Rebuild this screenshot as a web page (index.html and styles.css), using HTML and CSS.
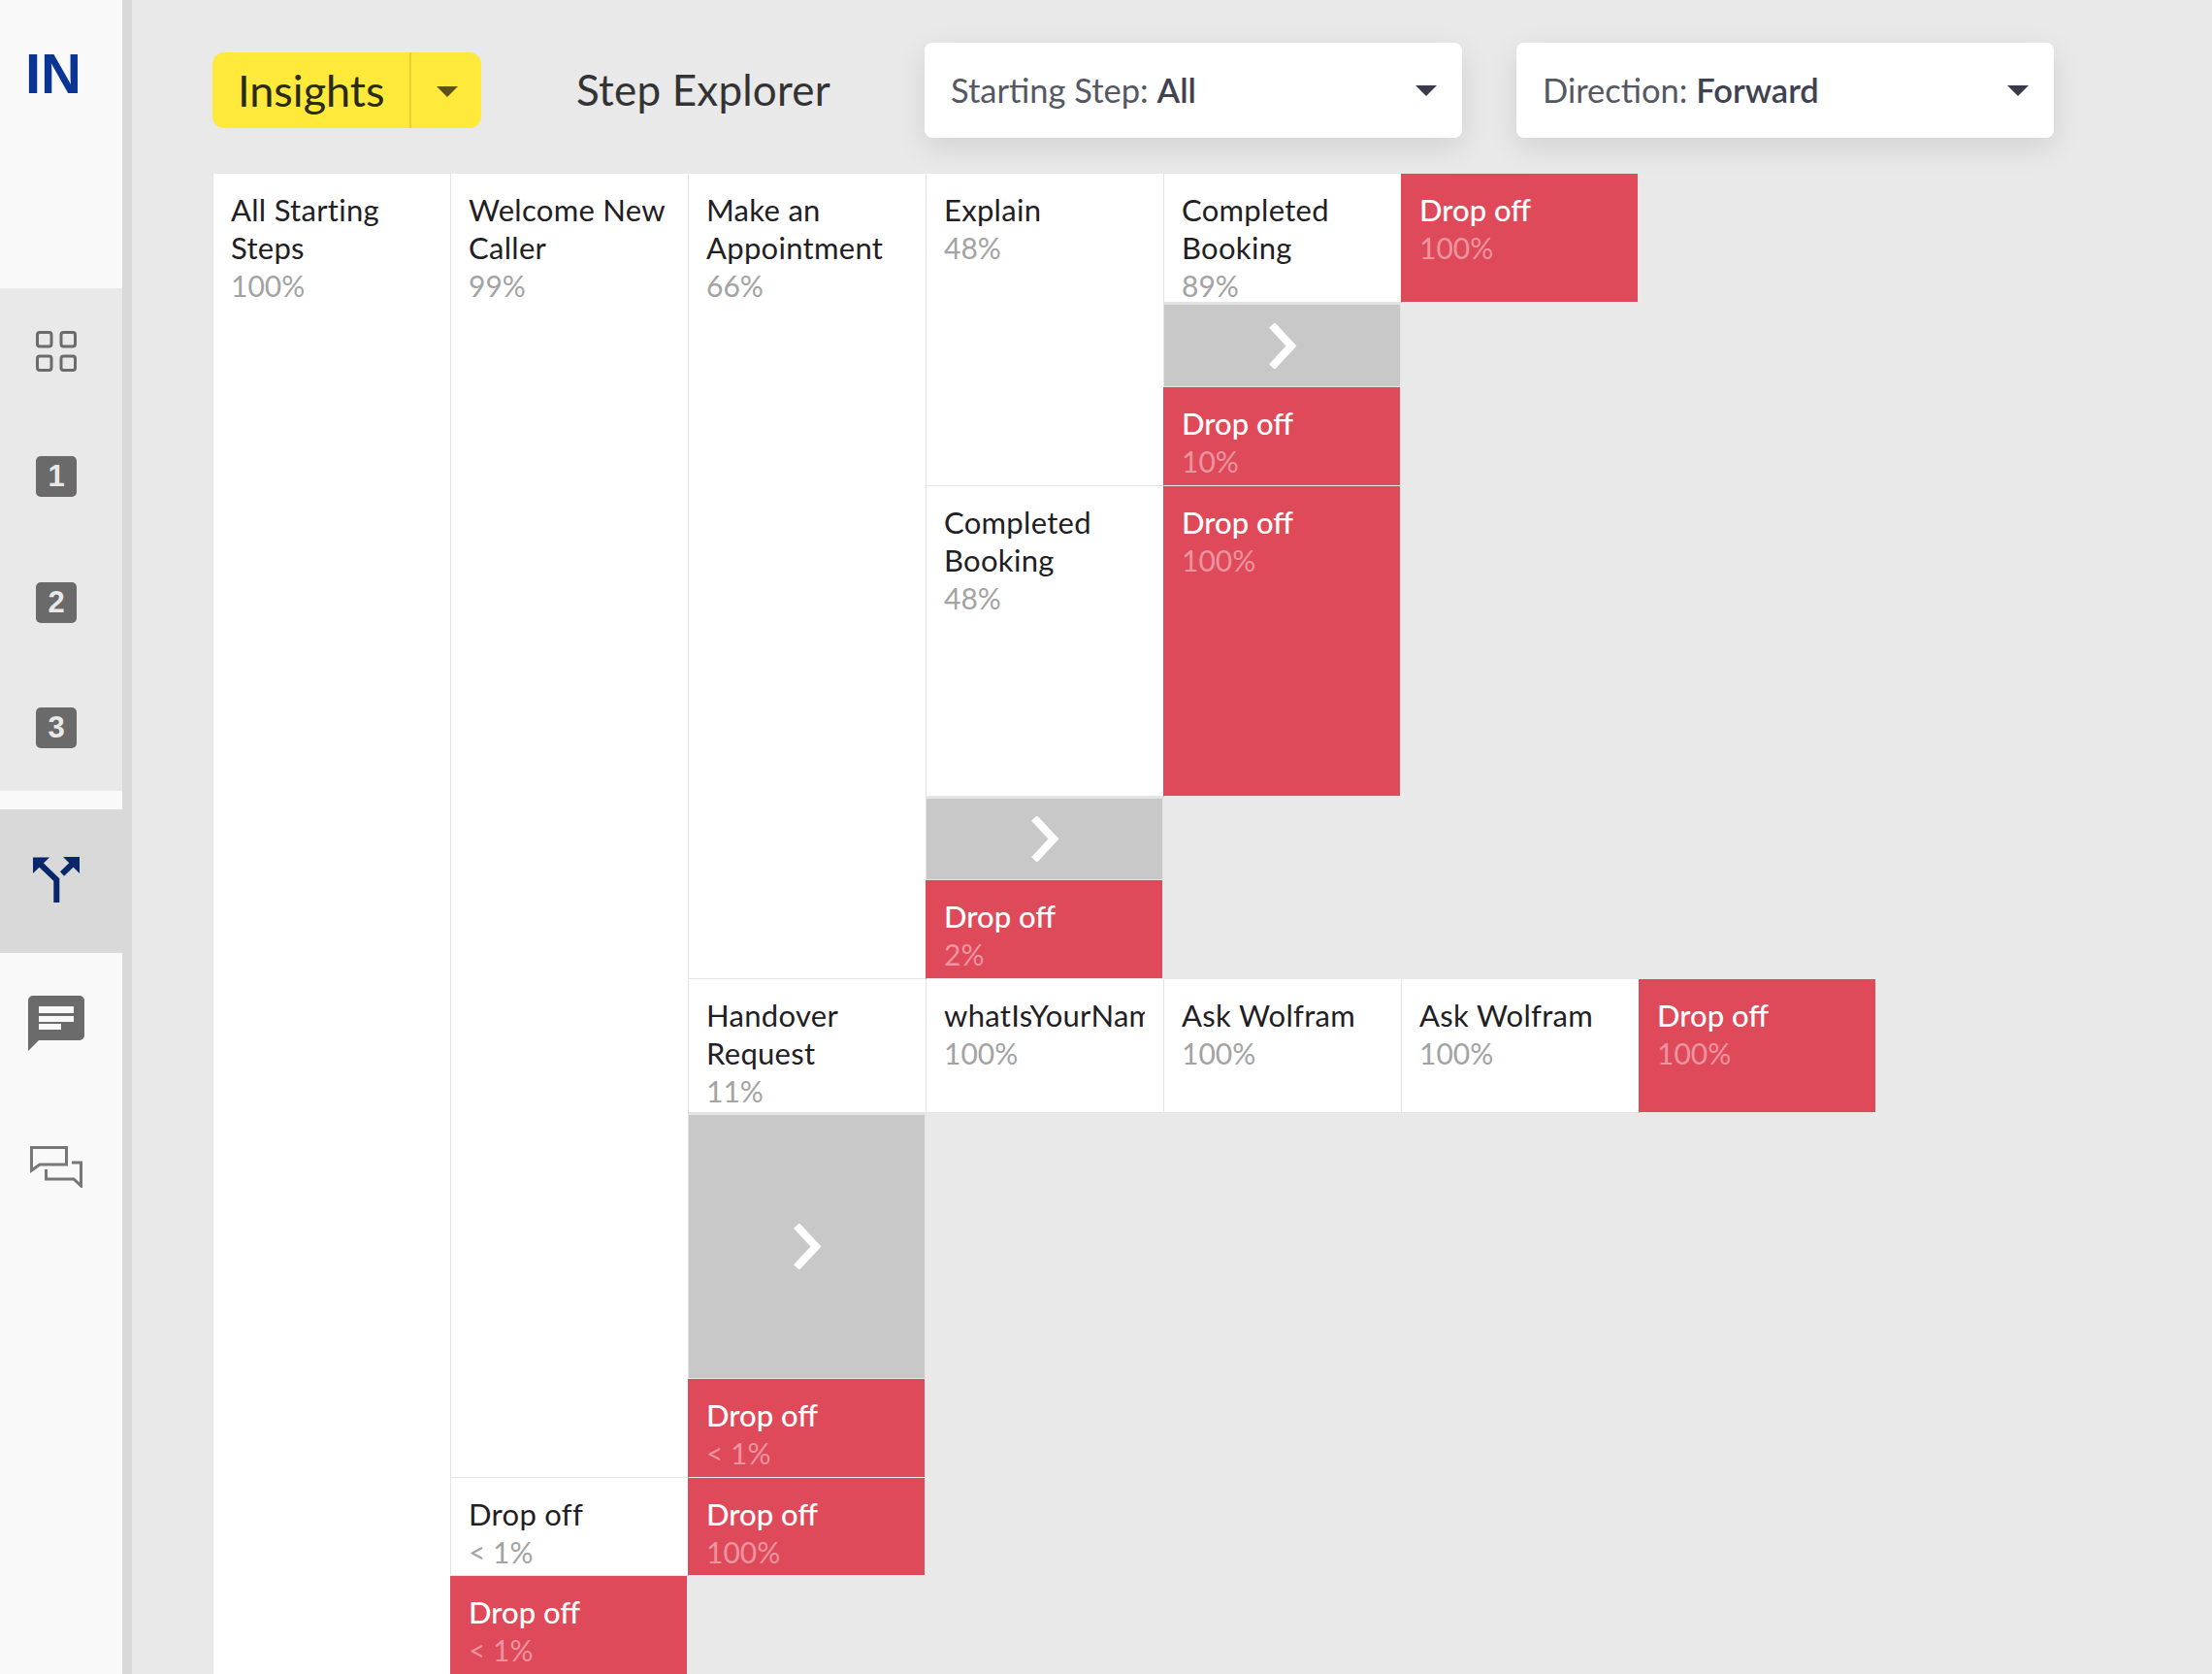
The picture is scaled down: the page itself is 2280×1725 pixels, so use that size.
FILE: index.html
```html
<!DOCTYPE html>
<html lang="en">
<head>
	<meta charset="UTF-8">
	<title>Step Explorer</title>
	<link rel="stylesheet" href="styles.css">
</head>
<body>
<div class="app">
	<div class="sidebar">
		<div class="logo">IN</div>
		<div class="side_group">
			<div class="side_item">
				<svg class="icon_grid" width="42" height="42" viewBox="0 0 42 42" fill="none" stroke="#6b6b6b" stroke-width="3">
					<rect x="1.5" y="1.5" width="14.5" height="14.5" rx="2.5"/>
					<rect x="26" y="1.5" width="14.5" height="14.5" rx="2.5"/>
					<rect x="1.5" y="26" width="14.5" height="14.5" rx="2.5"/>
					<rect x="26" y="26" width="14.5" height="14.5" rx="2.5"/>
				</svg>
			</div>
			<div class="side_item"><span class="badge">1</span></div>
			<div class="side_item"><span class="badge">2</span></div>
			<div class="side_item"><span class="badge">3</span></div>
		</div>
		<div class="side_item tall active">
			<svg width="48" height="47" viewBox="0 0 48 47" fill="none">
				<path d="M24.3 47V23.5L5 5M30 17.5L44 4" stroke="#08276b" stroke-width="6"/>
				<path d="M0 .5H17L0 17ZM48 0H31L48 17Z" fill="#08276b"/>
			</svg>
		</div>
		<div class="side_item tall">
			<svg width="58" height="57" viewBox="0 0 58 57">
				<path d="M5 0H53A5 5 0 0 1 58 5V41A5 5 0 0 1 53 46H11L0 57V5A5 5 0 0 1 5 0Z" fill="#6b6b6b"/>
				<path d="M11 11H47V18H11ZM11 21H47V27H11ZM11 29H34V35H11Z" fill="#f9f9f9"/>
			</svg>
		</div>
		<div class="side_item tall">
			<svg width="54" height="43" viewBox="0 0 54 43" fill="none" stroke="#777" stroke-width="3">
				<path d="M1.5 1.5H37.5V19H10L1.5 25Z"/>
				<path d="M43 17H52.5V41L45 34H16.5V24"/>
			</svg>
		</div>
	</div>

	<div class="main">
		<div class="topbar">
			<div class="insights">
				<span class="insights_name">Insights</span>
				<span class="insights_arrow"></span>
			</div>
			<div class="page_title">Step Explorer</div>
			<div class="select">
				<span>Starting Step: <b>All</b></span>
				<span class="select_arrow"></span>
			</div>
			<div class="select">
				<span>Direction: <b>Forward</b></span>
				<span class="select_arrow"></span>
			</div>
		</div>

		<div class="node chart">
			<div class="cell">
				<div class="name">All Starting Steps</div>
				<div class="pct">100%</div>
			</div>
			<div class="kids">
				<div class="node">
					<div class="cell">
						<div class="name">Welcome New Caller</div>
						<div class="pct">99%</div>
					</div>
					<div class="kids">
						<div class="node">
							<div class="cell">
								<div class="name">Make an Appointment</div>
								<div class="pct">66%</div>
							</div>
							<div class="kids">
								<div class="node">
									<div class="cell">
										<div class="name">Explain</div>
										<div class="pct">48%</div>
									</div>
									<div class="kids">
										<div class="node h133">
											<div class="cell">
												<div class="name">Completed Booking</div>
												<div class="pct">89%</div>
											</div>
											<div class="cell drop">
												<div class="name">Drop off</div>
												<div class="pct">100%</div>
											</div>
										</div>
										<div class="cell more h87"><svg width="30" height="47" viewBox="0 0 30 47" fill="none" stroke="#fff" stroke-width="8"><path d="M4 2L24 23.5L4 45"/></svg></div>
										<div class="cell drop h102">
											<div class="name">Drop off</div>
											<div class="pct">10%</div>
										</div>
									</div>
								</div>
								<div class="node h320">
									<div class="cell">
										<div class="name">Completed Booking</div>
										<div class="pct">48%</div>
									</div>
									<div class="cell drop">
										<div class="name">Drop off</div>
										<div class="pct">100%</div>
									</div>
								</div>
								<div class="cell more h86"><svg width="30" height="47" viewBox="0 0 30 47" fill="none" stroke="#fff" stroke-width="8"><path d="M4 2L24 23.5L4 45"/></svg></div>
								<div class="cell drop h102">
									<div class="name">Drop off</div>
									<div class="pct">2%</div>
								</div>
							</div>
						</div>
						<div class="node h138">
							<div class="cell">
								<div class="name">Handover Request</div>
								<div class="pct">11%</div>
							</div>
							<div class="cell">
								<div class="name clip">whatIsYourName</div>
								<div class="pct">100%</div>
							</div>
							<div class="cell">
								<div class="name">Ask Wolfram</div>
								<div class="pct">100%</div>
							</div>
							<div class="cell">
								<div class="name">Ask Wolfram</div>
								<div class="pct">100%</div>
							</div>
							<div class="cell drop">
								<div class="name">Drop off</div>
								<div class="pct">100%</div>
							</div>
						</div>
						<div class="cell more h274"><svg width="30" height="47" viewBox="0 0 30 47" fill="none" stroke="#fff" stroke-width="8"><path d="M4 2L24 23.5L4 45"/></svg></div>
						<div class="cell drop h102">
							<div class="name">Drop off</div>
							<div class="pct">&lt; 1%</div>
						</div>
					</div>
				</div>
				<div class="node h101">
					<div class="cell">
						<div class="name">Drop off</div>
						<div class="pct">&lt; 1%</div>
					</div>
					<div class="cell drop">
						<div class="name">Drop off</div>
						<div class="pct">100%</div>
					</div>
				</div>
				<div class="cell drop h102">
					<div class="name">Drop off</div>
					<div class="pct">&lt; 1%</div>
				</div>
			</div>
		</div>
	</div>
</div>
</body>
</html>
```

FILE: styles.css
```css
*{
	box-sizing:border-box;
	margin:0;
	padding:0;
}

body{
	background-color:#e9e9e9;
	font-family:"Lato","Liberation Sans",sans-serif;
	height:1725px;
	overflow:hidden;
}

.app{
	display:flex;
	height:1725px;
}

/* sidebar */
.sidebar{
	width:136px;
	flex:none;
	background-color:#f9f9f9;
	border-right:solid 10px #d9d9d9;
}

.logo{
	height:297px;
	padding:43px 0 0 26px;
	font-family:"Liberation Sans",sans-serif;
	font-weight:bold;
	font-size:58px;
	line-height:66px;
	color:#0a3595;
}

.side_group{
	background-color:#e9e9e9;
	height:518px;
	margin-bottom:19px;
}

.side_item{
	height:129.5px;
	display:flex;
	align-items:center;
	justify-content:center;
	padding-right:10px;
}

.side_item.tall{
	height:148px;
	padding-bottom:3px;
}

.side_item.active{
	background-color:#d9d9d9;
	margin-right:-10px;
	padding-right:20px;
}

.badge{
	width:42px;
	height:42px;
	border-radius:5px;
	background-color:#6a6a6a;
	color:#e9e9e9;
	font-family:"Liberation Sans",sans-serif;
	font-weight:bold;
	font-size:31px;
	line-height:42px;
	text-align:center;
}

/* top bar */
.main{
	flex:1;
	padding-left:83px;
}

.topbar{
	display:flex;
	align-items:center;
	height:98px;
	margin:44px 0 37px;
}

.insights{
	width:277px;
	height:78px;
	flex:none;
	display:flex;
	background-color:#ffe93b;
	border-radius:12px;
	color:#2b2a14;
	font-size:45px;
	line-height:78px;
}

.insights_name{
	width:205px;
	padding-left:26px;
	border-right:solid 2px #e6d235;
}

.insights_arrow{
	width:0;
	height:0;
	margin:35px 0 0 26px;
	border-left:solid 11px transparent;
	border-right:solid 11px transparent;
	border-top:solid 11px #5b5217;
}

.page_title{
	width:457px;
	flex:none;
	padding:0 0 2px 98px;
	font-size:44px;
	letter-spacing:0.2px;
	color:#333;
}

.select{
	width:554px;
	height:98px;
	flex:none;
	margin-right:56px;
	padding:0 26px 2px 27px;
	display:flex;
	align-items:center;
	justify-content:space-between;
	background-color:#fff;
	border-radius:8px;
	box-shadow:0 10px 30px rgba(0,0,0,0.1);
	font-size:34.5px;
	color:#555863;
}

.select b{
	font-weight:600;
	color:#3f4250;
}

.select_arrow{
	width:0;
	height:0;
	margin-top:2px;
	border-left:solid 11px transparent;
	border-right:solid 11px transparent;
	border-top:solid 11px #3a3a4a;
}

/* step tree */
.node{
	display:flex;
}

.kids{
	display:flex;
	flex-direction:column;
}

.cell{
	width:245px;
	flex:none;
	overflow:hidden;
	padding:18px 19px 0 18px;
	background-color:#fff;
	border-left:solid 1px #e4e4e4;
	border-bottom:solid 1px #e4e4e4;
	font-size:30px;
	line-height:39px;
	color:#1f2024;
}

.name{
	font-size:31px;
	letter-spacing:0.3px;
}

.pct{
	color:#a3a3a3;
}

.clip{
	white-space:nowrap;
	overflow:hidden;
}

.drop{
	background-color:#de4a59;
	border-left-color:#de4a59;
	border-right:solid 1px #e9e9e9;
	border-bottom-color:#e9e9e9;
	color:#fff;
}

.drop .name{
	font-weight:500;
	letter-spacing:0;
}

.drop .pct{
	color:#ee94a0;
}

.more{
	display:flex;
	align-items:center;
	justify-content:center;
	padding:0;
	background-color:#c8c8c8;
	border-top:solid 2px #e4e4e4;
	border-right:solid 1px #e4e4e4;
}

.h86{height:86px;}
.h87{height:87px;}
.h101{height:101px;}
.h102{height:102px;}
.h133{height:133px;}
.h138{height:138px;}
.h274{height:274px;}
.h320{height:320px;}
```
